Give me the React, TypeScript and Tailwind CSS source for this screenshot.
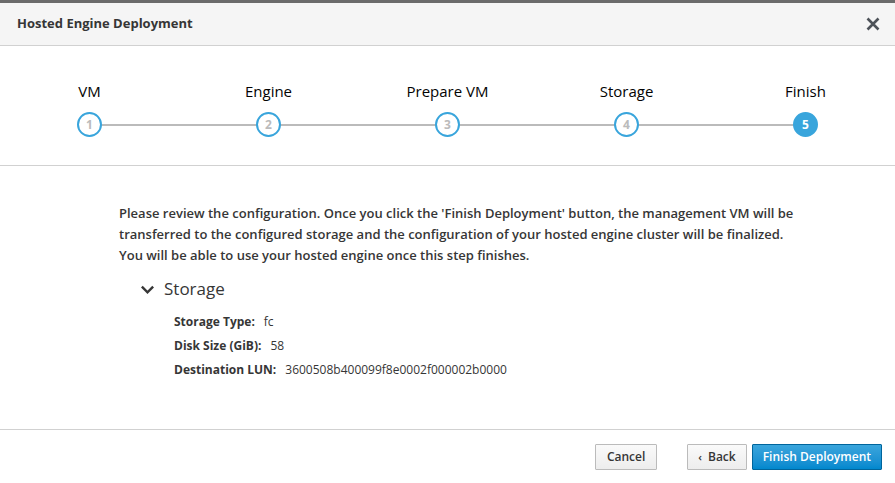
import React from 'react';

const steps = ['VM', 'Engine', 'Prepare VM', 'Storage', 'Finish'];
const current = 5;

const details: [string, string][] = [
  ['Storage Type:', 'fc'],
  ['Disk Size (GiB):', '58'],
  ['Destination LUN:', '3600508b400099f8e0002f000002b0000'],
];

function App() {
  return (
    <div className="w-[895px] h-[483px] bg-white flex flex-col overflow-hidden text-[#363636] font-['Open_Sans',_'Noto_Sans',sans-serif]">
      {/* top strip */}
      <div className="h-[3px] bg-[#6b6b6b]" />

      {/* header */}
      <div className="h-[43px] bg-[#f5f5f5] border-b border-[#d1d1d1] flex items-center justify-between pl-[17px] pr-[14px]">
        <h1 className="text-[13px] font-bold text-[#363636]">Hosted Engine Deployment</h1>
        <button className="text-[#4d5258]">
          <svg width="16" height="16" viewBox="0 0 16 16">
            <path d="M2.5 2.5 L13.5 13.5 M13.5 2.5 L2.5 13.5" stroke="currentColor" strokeWidth="2.6" strokeLinecap="butt" />
          </svg>
        </button>
      </div>

      {/* wizard steps */}
      <div className="relative border-b border-[#d1d1d1] pt-[35px] pb-[28px]">
        <div className="absolute left-[10%] right-[10%] top-[78px] h-[2px] bg-[#bbbbbb]" />
        <div className="relative grid grid-cols-5">
          {steps.map((s, i) => {
            const active = i + 1 === current;
            return (
              <div key={s} className="flex flex-col items-center">
                <div className="text-[15px] leading-[20px] text-[#030303]">{s}</div>
                <div
                  className={
                    active
                      ? 'mt-[11px] w-[25px] h-[25px] rounded-full bg-[#39a5dc] border-2 border-[#39a5dc] flex items-center justify-center text-[12px] font-bold text-white'
                      : 'mt-[11px] w-[25px] h-[25px] rounded-full bg-white border-2 border-[#39a5dc] flex items-center justify-center text-[12px] font-bold text-[#bbbbbb]'
                  }
                >
                  {i + 1}
                </div>
              </div>
            );
          })}
        </div>
      </div>

      {/* body */}
      <div className="flex-1 pl-[119px] pt-[37px]">
        <p className="w-[690px] text-[13px] leading-[21px] font-semibold text-[#363636]">
          Please review the configuration. Once you click the 'Finish Deployment' button, the management VM will be
          transferred to the configured storage and the configuration of your hosted engine cluster will be finalized.
          You will be able to use your hosted engine once this step finishes.
        </p>
        <div className="mt-[11px] ml-[21px] flex items-center gap-[9px] h-[24px]">
          <svg width="15" height="15" viewBox="0 0 16 16" className="text-[#363636]">
            <path d="M2 5 L8 11 L14 5" fill="none" stroke="currentColor" strokeWidth="2.6" />
          </svg>
          <span className="text-[17px] text-[#363636]">Storage</span>
        </div>
        <div className="mt-[12px] ml-[55px] flex flex-col gap-[7px]">
          {details.map(([k, v]) => (
            <div key={k} className="flex gap-[9px] text-[12px] leading-[17px]">
              <span className="font-bold">{k}</span>
              <span>{v}</span>
            </div>
          ))}
        </div>
      </div>

      {/* footer */}
      <div className="h-[54px] border-t border-[#d1d1d1] flex items-start justify-end pt-[14px] pr-[13px]">
        <button className="h-[26px] px-[11px] text-[12px] font-semibold text-[#363636] border border-[#bbbbbb] rounded-[1px] bg-gradient-to-b from-[#fafafa] to-[#ededed] mr-[30px]">
          Cancel
        </button>
        <button className="h-[26px] px-[10px] text-[12px] font-semibold text-[#363636] border border-[#bbbbbb] rounded-[1px] bg-gradient-to-b from-[#fafafa] to-[#ededed] mr-[5px] flex items-center gap-[6px]">
          <span className="text-[11px]">‹</span>
          <span>Back</span>
        </button>
        <button className="h-[26px] px-[10px] text-[12px] font-semibold text-white border border-[#00659c] rounded-[1px] bg-gradient-to-b from-[#39a5dc] to-[#0088ce]">
          Finish Deployment
        </button>
      </div>
    </div>
  );
}

export default App;
